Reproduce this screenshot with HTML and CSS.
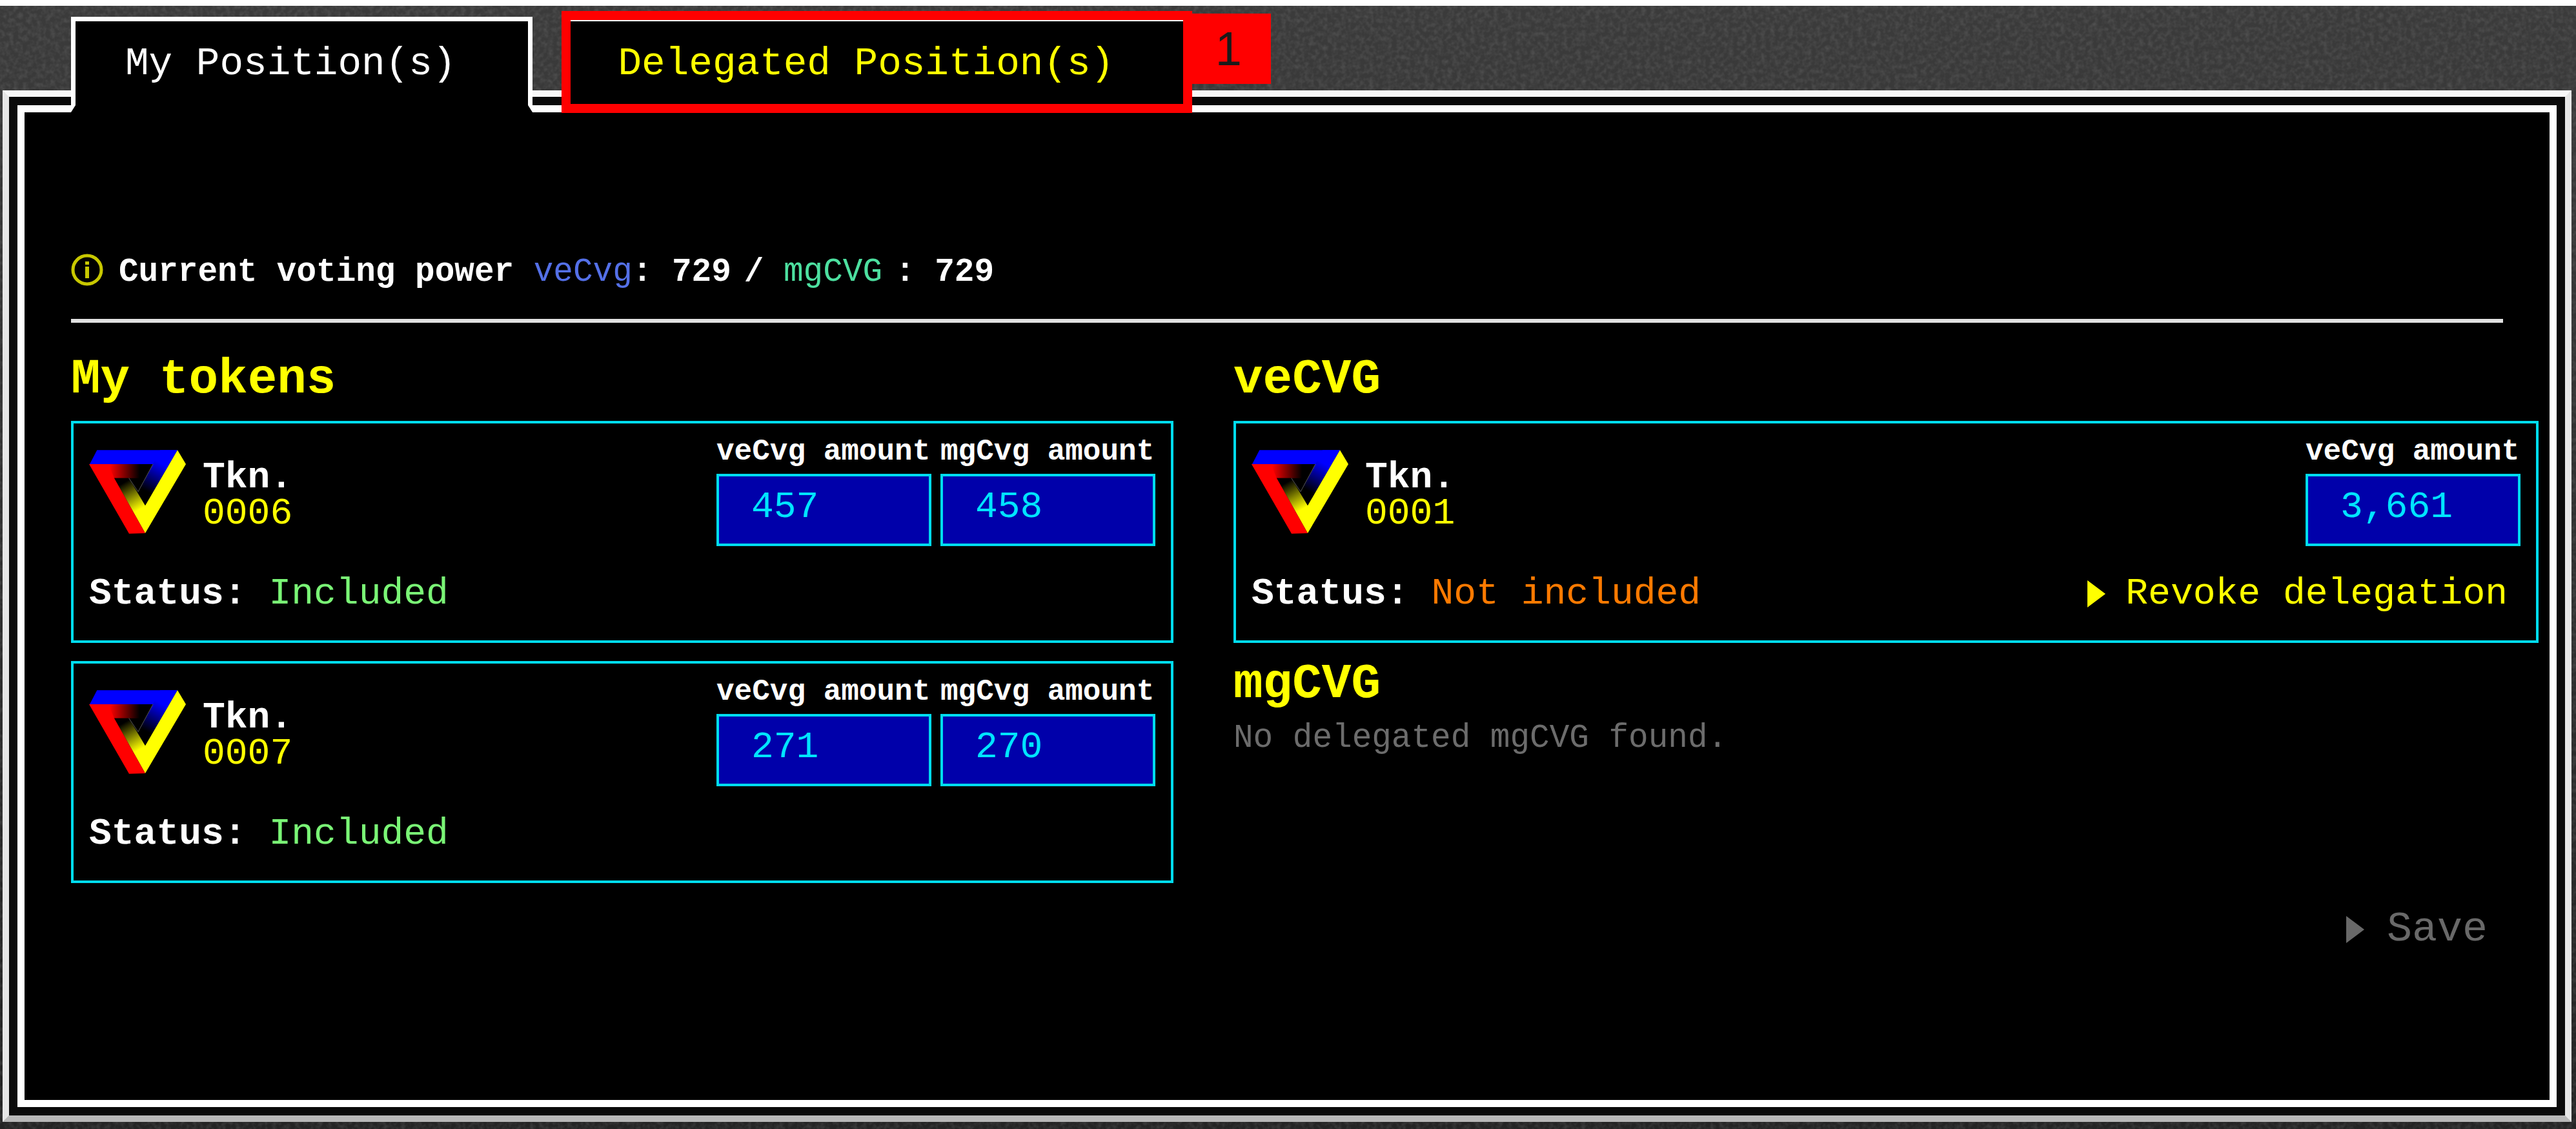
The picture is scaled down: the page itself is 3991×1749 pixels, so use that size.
FILE: index.html
```html
<!DOCTYPE html>
<html lang="en">
<head>
<meta charset="utf-8">
<meta name="viewport" content="width=device-width, initial-scale=1">
<title>Voting power delegation</title>
<link rel="stylesheet" href="styles.css">
</head>
<body>
<svg class="grain" aria-hidden="true">
  <filter id="noise" x="0" y="0" width="100%" height="100%" color-interpolation-filters="sRGB">
    <feTurbulence type="fractalNoise" baseFrequency="0.14" numOctaves="2" seed="4"/>
    <feColorMatrix values="0 0 0 0 1  0 0 0 0 1  0 0 0 0 1  0.5 0 0 0 -0.18"/>
  </filter>
  <rect width="100%" height="100%" filter="url(#noise)"/>
</svg>
<svg class="defs" aria-hidden="true">
  <defs>
    <linearGradient id="red" gradientUnits="userSpaceOnUse" x1="95" y1="0" x2="235" y2="0"><stop offset="0" stop-color="#f00"/><stop offset="1" stop-color="#000"/></linearGradient>
    <linearGradient id="blue" gradientUnits="userSpaceOnUse" x1="335" y1="62" x2="265" y2="190"><stop offset="0" stop-color="#00f"/><stop offset="1" stop-color="#000"/></linearGradient>
    <linearGradient id="yellow" gradientUnits="userSpaceOnUse" x1="163" y1="150" x2="235" y2="275"><stop offset="0" stop-color="#000"/><stop offset="1" stop-color="#ff0"/></linearGradient>
    <symbol id="logo" viewBox="0 0 450 388">
      <path fill="#00f" d="M37 0H411L297 65H3Z"/>
      <path fill="url(#blue)" d="M297 65 330 0H411L261 258 228 193Z"/>
      <path fill="url(#red)" d="M0 65H297L262 130H117Z"/>
      <path fill="url(#yellow)" d="M117 130H185L261 258V386Z"/>
      <path fill="#f00" d="M0 65H90L117 130 261 386 186 388Z"/>
      <path fill="#ff0" d="M411 0 450 65 261 386V258Z"/>
      <path fill="none" stroke="#555" stroke-width="3" d="M185 130 228 193 297 65"/>
    </symbol>
  </defs>
</svg>

<main class="page">
  <div class="tabs" role="tablist">
    <div class="tab-slot">
      <button class="tab tab-active" type="button" role="tab" aria-selected="true">My Position(s)</button>
    </div>
    <div class="tab-slot">
      <button class="tab" type="button" role="tab" aria-selected="false">Delegated Position(s)</button>
      <span class="callout"></span>
      <span class="callout-number">1</span>
    </div>
  </div>

  <div class="frame">
    <section class="panel" role="tabpanel">
      <header class="power">
        <svg class="info" viewBox="0 0 50 50" aria-hidden="true"><circle cx="25" cy="25" r="22" fill="none" stroke="currentColor" stroke-width="5"/><path d="M25 12v5M25 20v18" stroke="currentColor" stroke-width="6"/></svg>
        <p class="power-text">
          <span>Current voting power <span class="ve">veCvg</span>: 729</span>
          <span>/ <span class="mg">mgCVG</span></span>
          <span>: 729</span>
        </p>
      </header>

      <div class="columns">
        <section class="column">
          <h2>My tokens</h2>
          <div class="cards">
            <article class="card">
              <div class="card-top">
                <svg class="logo" aria-hidden="true"><use href="#logo"/></svg>
                <p class="token"><b>Tkn.</b><span>0006</span></p>
                <div class="amounts">
                  <label>veCvg amount<input type="text" value="457" readonly></label>
                  <label>mgCvg amount<input type="text" value="458" readonly></label>
                </div>
              </div>
              <div class="card-bottom"><p><b>Status:</b> <span class="included">Included</span></p></div>
            </article>
            <article class="card">
              <div class="card-top">
                <svg class="logo" aria-hidden="true"><use href="#logo"/></svg>
                <p class="token"><b>Tkn.</b><span>0007</span></p>
                <div class="amounts">
                  <label>veCvg amount<input type="text" value="271" readonly></label>
                  <label>mgCvg amount<input type="text" value="270" readonly></label>
                </div>
              </div>
              <div class="card-bottom"><p><b>Status:</b> <span class="included">Included</span></p></div>
            </article>
          </div>
        </section>

        <section class="column">
          <h2>veCVG</h2>
          <div class="cards">
            <article class="card">
              <div class="card-top">
                <svg class="logo" aria-hidden="true"><use href="#logo"/></svg>
                <p class="token"><b>Tkn.</b><span>0001</span></p>
                <div class="amounts">
                  <label>veCvg amount<input type="text" value="3,661" readonly></label>
                </div>
              </div>
              <div class="card-bottom">
                <p><b>Status:</b> <span class="excluded">Not included</span></p>
                <button class="action revoke" type="button"><svg class="arrow" viewBox="0 0 28 42" aria-hidden="true"><path fill="currentColor" d="M0 0 28 21 0 42Z"/></svg>Revoke delegation</button>
              </div>
            </article>
          </div>
          <h2 class="second">mgCVG</h2>
          <p class="empty">No delegated mgCVG found.</p>
        </section>
      </div>

      <footer class="footer">
        <button class="action save" type="button" disabled><svg class="arrow" viewBox="0 0 28 42" aria-hidden="true"><path fill="currentColor" d="M0 0 28 21 0 42Z"/></svg>Save</button>
      </footer>
    </section>
  </div>
</main>
</body>
</html>
```
FILE: styles.css
```css
* {
  box-sizing: border-box;
}

body {
  margin: 0;
  color: #fff;
  background: linear-gradient(#3b3b3b, #242424);
  font-family: "Liberation Mono", monospace;
  font-size: 58px;
  line-height: 56px;
}

h2,
p {
  margin: 0;
}

button,
input {
  font: inherit;
}

.grain {
  position: fixed;
  inset: 0;
  z-index: -1;
  width: 100%;
  height: 100%;
  opacity: 0.4;
}

.defs {
  position: absolute;
  width: 0;
  height: 0;
}

.page {
  display: flex;
  flex-direction: column;
  min-height: 100vh;
  padding: 17px 7px 11px 4px;
  border-top: 9px solid #fff;
}

/* Tabs hang over the top edge of the frame */
.tabs {
  display: flex;
  gap: 48px;
  margin: 0 0 -34px 106px;
  z-index: 1;
}

.tab-slot {
  position: relative;
}

.tab {
  display: block;
  min-width: 715px;
  height: 148px;
  padding: 2px 112px 0 77px;
  border: 7px solid #fff;
  border-bottom: 11px solid #000;
  color: #ff0;
  background: #000;
  font-size: 61px;
  text-align: left;
  white-space: nowrap;
}

.tab-active {
  color: #fff;
}

.callout {
  position: absolute;
  inset: -9px -2px -1px -3px;
  border: 14px solid #f00;
  pointer-events: none;
}

.callout-number {
  position: absolute;
  top: -5px;
  left: 100%;
  width: 124px;
  height: 109px;
  padding-right: 8px;
  color: #1a1a1a;
  background: #f00;
  font-family: "Liberation Sans", sans-serif;
  font-size: 74px;
  line-height: 109px;
  text-align: center;
}

.frame {
  flex: 1;
  display: flex;
  padding: 13px;
  border: 10px solid;
  border-color: #f8f8f8 #e6e6e6 #b8b8b8;
  background: #0a0a0a;
}

.panel {
  flex: 1;
  min-width: 0;
  padding: 210px 72px 48px;
  border: 11px solid #fff;
  background: #000;
}

.power {
  display: flex;
  align-items: center;
  gap: 24px;
  padding-bottom: 42px;
  border-bottom: 6px solid #e0e0e0;
  font-size: 51px;
  line-height: 60px;
}

.power-text {
  display: flex;
  gap: 20px;
  padding-top: 8px;
  font-weight: bold;
}

.info {
  width: 50px;
  height: 50px;
  color: #c8c800;
}

.ve,
.mg {
  font-weight: normal;
}

.ve {
  color: #5470e8;
}

.mg {
  color: #4de0a0;
}

.columns {
  display: grid;
  grid-template-columns: 1708fr 2022fr;
  gap: 93px;
  margin-right: -55px;
  padding-top: 48px;
}

h2 {
  margin-bottom: 24px;
  color: #ff0;
  font-size: 76px;
  line-height: 80px;
}

.cards {
  display: grid;
  gap: 28px;
}

.card {
  padding: 24px;
  border: 4px solid #00dcf0;
}

.card-top {
  display: flex;
  gap: 26px;
  height: 172px;
}

.logo {
  width: 150px;
  height: 130px;
  margin-top: 17px;
}

.token {
  display: grid;
  align-content: start;
  flex: 1;
  padding-top: 32px;
}

.token span {
  color: #ff0;
}

.amounts {
  display: flex;
  gap: 14px;
}

label {
  display: grid;
  width: 333px;
  align-content: start;
  gap: 14px;
  font-size: 46px;
  font-weight: bold;
  line-height: 40px;
  white-space: nowrap;
}

input {
  width: 100%;
  height: 112px;
  padding: 0 50px 10px;
  border: 4px solid #00dcf0;
  border-radius: 0;
  outline: none;
  color: #00e4ff;
  background: #0000aa;
  font-size: 58px;
  font-weight: normal;
}

.card-bottom {
  display: flex;
  justify-content: space-between;
  padding: 40px 20px 20px 0;
}

.included {
  color: #7af576;
}

.excluded {
  color: #ff7a00;
}

.action {
  display: flex;
  align-items: center;
  gap: 31px;
  padding: 0;
  border: 0;
  background: none;
}

.arrow {
  width: 28px;
  height: 42px;
}

.revoke {
  color: #ff0;
}

.second {
  margin: 24px 0 16px;
}

.empty {
  color: #6c6c6c;
  font-size: 51px;
}

.footer {
  display: flex;
  justify-content: flex-end;
  padding: 44px 24px 0 0;
}

.save {
  gap: 35px;
  color: #696969;
  font-size: 65px;
}
```
